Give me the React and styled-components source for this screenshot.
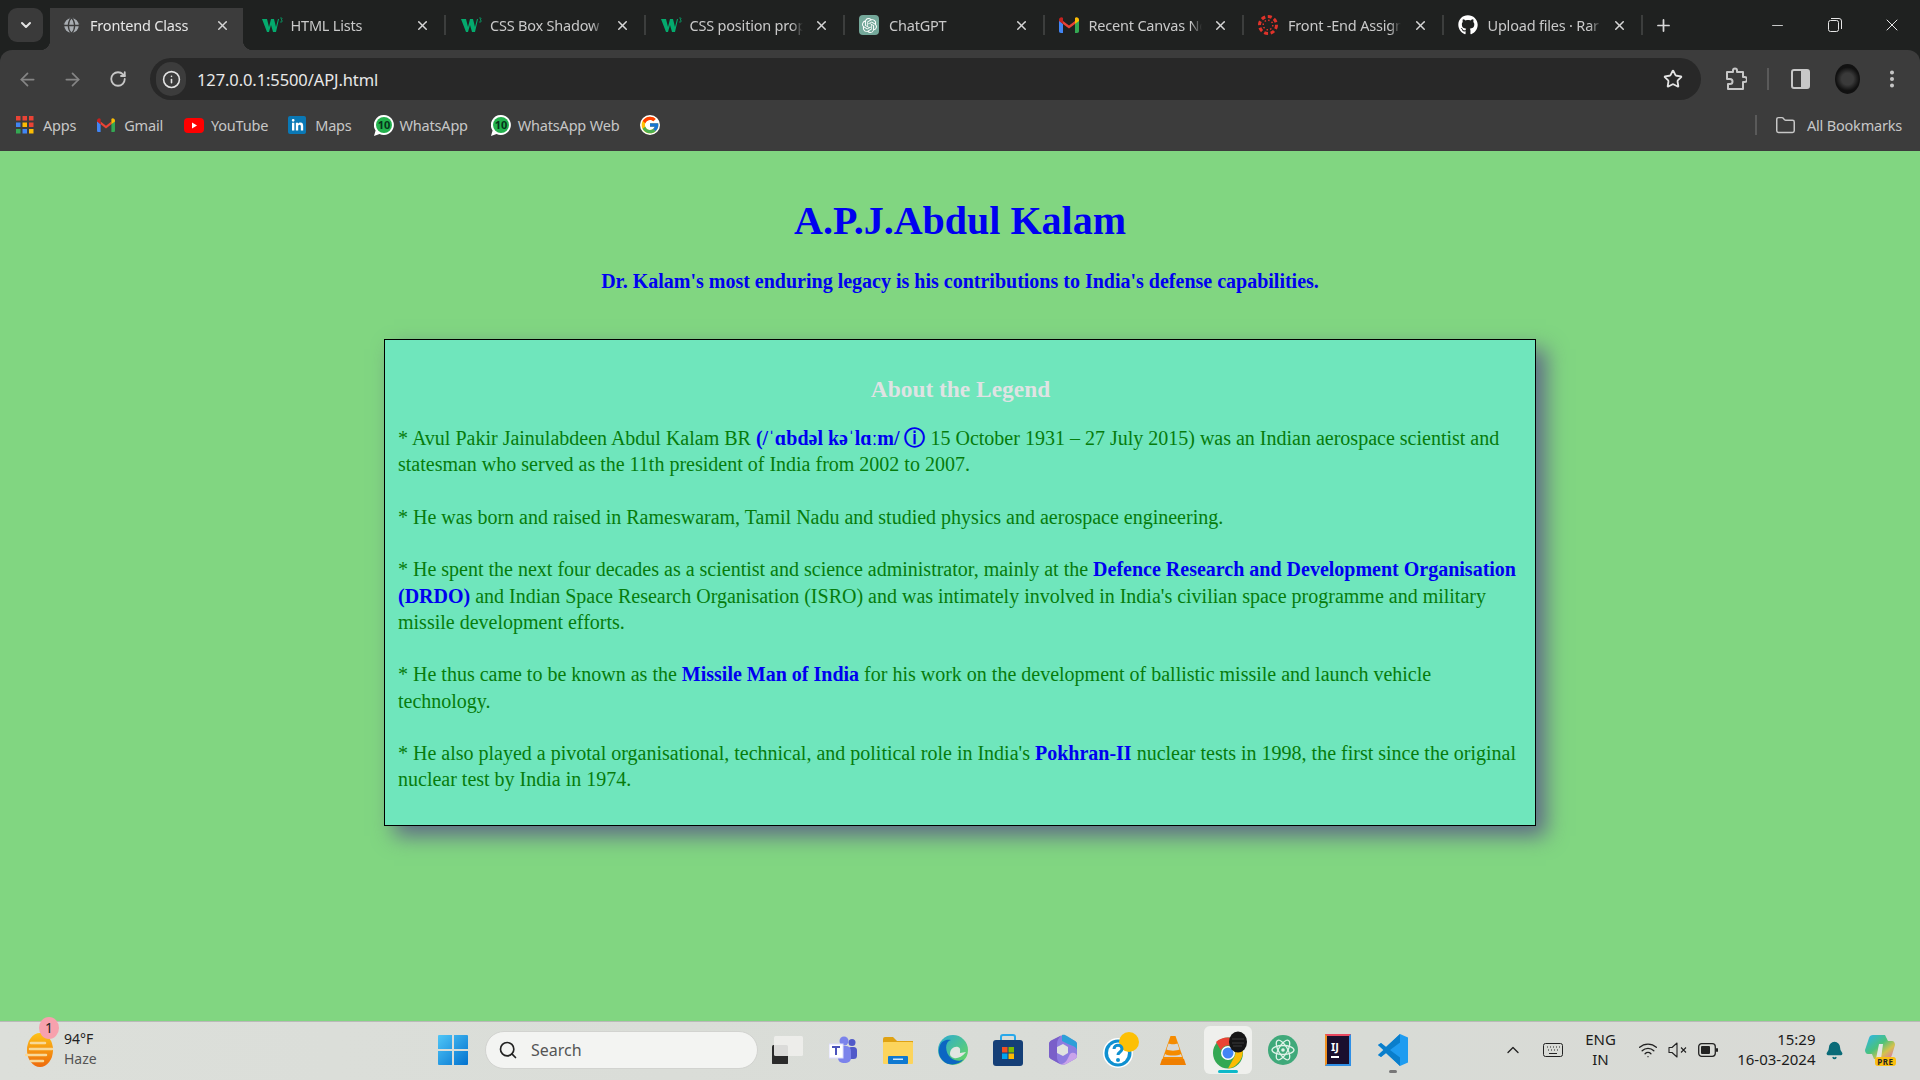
import React from 'react'
import styled, { createGlobalStyle } from 'styled-components'
import {
  ArrowLeft, ArrowRight, RotateCw, Star, EllipsisVertical, Folder, X, Plus, Minus,
  ChevronDown, ChevronUp, Search, Wifi, Bell, Globe, Info,
} from 'lucide-react'
import { FaGithub, FaLinkedinIn } from 'react-icons/fa'
import { FcGoogle } from 'react-icons/fc'
import { SiOpenai } from 'react-icons/si'

const GlobalStyle = createGlobalStyle`
  html, body { margin: 0; padding: 0; height: 100%; }
  body { overflow: hidden; font-family: "Noto Sans", sans-serif; }
`

/* ---- small drawn icons ---- */

const W3 = () => (
  <svg width="22" height="16" viewBox="0 0 22 16">
    <path d="M1 2h5l2 8 2-8h3l2 8 2-8h1l-3 13h-3l-2-7-2 7H6z" fill="#04aa6d" />
    <path d="M19 1h2v1l-1 1h1v2h-2" fill="none" stroke="#04aa6d" strokeWidth=".7" />
  </svg>
)

const GmailIcon = ({ size = 20 }) => (
  <svg width={size} height={size * 0.8} viewBox="0 0 20 16">
    <path d="M0 3v11c0 1 .6 2 2 2h2V7z" fill="#4285f4" />
    <path d="M20 3v11c0 1-.6 2-2 2h-2V7z" fill="#34a853" />
    <path d="M4 16V7l6 4.6L16 7V4l-6 4.6L4 4z" fill="#ea4335" />
    <path d="M0 3c0-2.500 2.700-3.500 4-2v6L0 4z" fill="#c5221f" />
    <path d="M20 3c0-2.500-2.700-3.500-4-2v6l4-3z" fill="#fbbc04" />
  </svg>
)

const CanvasIcon = () => (
  <svg width="20" height="20" viewBox="0 0 20 20" fill="#e0332a">
    <circle cx="10" cy="10" r="8.500" fill="none" stroke="#e0332a" strokeWidth="3" strokeDasharray="4 2.600" />
    <circle cx="10" cy="10" r="4.800" fill="none" stroke="#e0332a" strokeWidth="1.400" strokeDasharray="1.500 2.200" />
  </svg>
)

const AppsIcon = () => (
  <svg width="18" height="18" viewBox="0 0 18 18">
    {['#ea4335', '#ea4335', '#ea4335', '#4285f4', '#fbbc04', '#ea4335', '#34a853', '#4285f4', '#fbbc04'].map((c, i) => (
      <rect key={i} x={(i % 3) * 6.5} y={Math.floor(i / 3) * 6.500} width="4.500" height="4.500" fill={c} />
    ))}
  </svg>
)

const YoutubeIcon = () => (
  <svg width="20" height="15" viewBox="0 0 20 15">
    <rect width="20" height="15" rx="4" fill="#f00" />
    <path d="M8 4.500v6l5-3z" fill="#fff" />
  </svg>
)

const WhatsAppBadge = () => (
  <svg width="20" height="21" viewBox="0 0 20 21">
    <path d="M10 0a10 10 0 1 1-4.500 19L0 21l1.600-5.400A10 10 0 0 1 10 0z" fill="#fff" />
    <circle cx="10" cy="10" r="8" fill="#23b14d" />
    <text x="10" y="14" textAnchor="middle" fontSize="11" fontWeight="700" fontFamily="Noto Sans, sans-serif" fill="#06331a">10</text>
  </svg>
)

const ExtensionIcon = () => (
  <svg width="22" height="24" viewBox="0 0 22 24" fill="none" stroke="#c7c7c7" strokeWidth="2" strokeLinejoin="round">
    <path d="M2 5h6V3.500a2 2 0 0 1 4 0V5h6v5h1.500a2.300 2.300 0 0 1 0 5H18v7H3v-5h2a2 2 0 0 0 0-5H2z" />
  </svg>
)

const SidePanelIcon = () => (
  <svg width="20" height="20" viewBox="0 0 20 20">
    <rect x="1" y="1" width="17" height="18" rx="2" fill="none" stroke="#c7c7c7" strokeWidth="2" />
    <rect x="10" y="1" width="8" height="18" fill="#c7c7c7" />
  </svg>
)

const RestoreIcon = () => (
  <svg width="14" height="14" viewBox="0 0 14 14" fill="none" stroke="#e6e6e6">
    <rect x=".5" y="2.500" width="10" height="11" rx="2" />
    <path d="M3 .5h8a2.500 2.500 0 0 1 2.500 2.500v8" />
  </svg>
)

const WeatherIcon = () => (
  <svg width="30" height="36" viewBox="0 0 30 36">
    <defs>
      <linearGradient id="sun" x1="0" y1="0" x2="0" y2="1">
        <stop offset="0" stopColor="#fdc218" />
        <stop offset="1" stopColor="#ee6a0c" />
      </linearGradient>
    </defs>
    <ellipse cx="15" cy="18" rx="13" ry="17" fill="url(#sun)" />
    <g stroke="#f8d99a" strokeWidth="2.500" strokeLinecap="round">
      <path d="M6 11h14M5 17h22M1 23h20M6 29h12" />
    </g>
  </svg>
)

const WindowsIcon = () => (
  <svg width="30" height="30" viewBox="0 0 30 30">
    <defs>
      <linearGradient id="win" x1="0" y1="0" x2="1" y2="1">
        <stop offset="0" stopColor="#4fc6f7" />
        <stop offset="1" stopColor="#0272cf" />
      </linearGradient>
    </defs>
    <path d="M0 1a1 1 0 0 1 1-1h13v14H0zM16 0h13a1 1 0 0 1 1 1v13H16zM0 16h14v14H1a1 1 0 0 1-1-1zM16 16h14v13a1 1 0 0 1-1 1H16z" fill="url(#win)" />
  </svg>
)

const TaskViewIcon = () => (
  <svg width="32" height="30" viewBox="0 0 32 30">
    <rect x="0" y="10" width="16" height="19" rx="1.500" fill="#2b2b2b" />
    <rect x="2" y="1" width="29" height="20" rx="1.500" fill="#eeeeec" opacity=".9" />
    <rect x="0" y="21" width="16" height="8" rx="1" fill="#2b2b2b" />
  </svg>
)

const TeamsIcon = () => (
  <svg width="28" height="28" viewBox="0 0 28 28">
    <circle cx="23" cy="6.500" r="3.500" fill="#5059c9" />
    <circle cx="15" cy="5" r="4.500" fill="#7b83eb" />
    <rect x="19" y="11" width="9" height="12" rx="3.500" fill="#5059c9" />
    <rect x="9" y="10" width="13" height="17" rx="5" fill="#7b83eb" />
    <rect x="0" y="8" width="14" height="14" fill="#fff" stroke="#dcdcff" />
    <path d="M3 11h8M7 11v8" stroke="#4b53bc" strokeWidth="2" />
  </svg>
)

const FolderColorIcon = () => (
  <svg width="30" height="28" viewBox="0 0 30 28">
    <path d="M0 3a2 2 0 0 1 2-2h8l4 4h16v4H0z" fill="#dfa213" />
    <rect x="0" y="6" width="30" height="22" rx="1" fill="#fcd45c" />
    <rect x="5" y="20" width="20" height="8" rx="1" fill="#0f79d1" />
    <rect x="10" y="22.500" width="10" height="1.500" fill="#cfe8fb" />
  </svg>
)

const EdgeIcon = () => (
  <svg width="30" height="30" viewBox="0 0 30 30">
    <defs>
      <linearGradient id="edge" x1="0" y1="0" x2="1" y2="1">
        <stop offset="0" stopColor="#2aa9d6" />
        <stop offset="1" stopColor="#6bd95a" />
      </linearGradient>
    </defs>
    <circle cx="15" cy="15" r="15" fill="url(#edge)" />
    <path d="M1 14C2 6 8 4 13 5c-7 2-6 13 0 18 4 3 9 4 13 1-4 5-12 7-18 4C3 25 0 20 1 14z" fill="#0c66c2" />
    <path d="M12 19c0-5 4-8 8-7 3 1 2 4 2 6l6-1c-4 5-9 7-12 6-2-.5-4-2-4-4z" fill="#e2e6e2" />
  </svg>
)

const StoreIcon = () => (
  <svg width="30" height="32" viewBox="0 0 30 32">
    <path d="M8 6V3a2 2 0 0 1 2-2h10a2 2 0 0 1 2 2v3" fill="none" stroke="#28a8ea" strokeWidth="2" />
    <rect x="0" y="6" width="30" height="26" rx="3" fill="#153f77" />
    <rect x="9" y="13" width="5.500" height="5.500" fill="#f25022" />
    <rect x="15.500" y="13" width="5.500" height="5.500" fill="#7fba00" />
    <rect x="9" y="19.500" width="5.500" height="5.500" fill="#00a4ef" />
    <rect x="15.500" y="19.500" width="5.500" height="5.500" fill="#ffb900" />
  </svg>
)

const M365Icon = () => (
  <svg width="28" height="32" viewBox="0 0 28 32">
    <path d="M14 1 26 7c1.500 1 2 2 2 3v12c0 1-.5 2-2 3l-9 5c-2 1-4 1-6 0l-9-5c-1.500-1-2-2-2-3V10c0-1 .5-2 2-3z" fill="#8e7ce0" />
    <path d="M13 1c2-.5 3 0 5 1l8 5c1.500 1 2 2 2 3v7c0-3-2-4-4-5l-5-2-6-3z" fill="#2d9fd8" />
    <path d="M0 10c0-2 1-3 3-4l10-5C9 4 8 7 8 10v14c0 2 1 3 3 6l-9-5c-1.500-1-2-2-2-3z" fill="#7a5fc9" />
    <path d="M28 22c0 1-.5 2-2 3l-9 5c-2 1-4 1-6 0 4 0 6-2 8-6l2-4c2-2 6-2 7 2z" fill="#c9a3ea" />
    <path d="M14 10l5 3v6l-5 3-6-3v-6z" fill="#e0e3df" />
  </svg>
)

const HelpIcon = () => (
  <svg width="42" height="36" viewBox="-7 0 42 36">
    <ellipse cx="14" cy="21" rx="15" ry="15" fill="#fff" />
    <ellipse cx="14" cy="21" rx="13.500" ry="13.500" fill="#0f90d0" />
    <ellipse cx="14" cy="21" rx="10" ry="10.500" fill="#fff" />
    <ellipse cx="25" cy="10" rx="10" ry="10" fill="#fdc005" />
    <path d="M10 17c0-5 8-5 8 0 0 3-4 3-4 6" fill="none" stroke="#0f90d0" strokeWidth="3" />
    <circle cx="14" cy="28" r="2" fill="#0f90d0" />
  </svg>
)

const VlcIcon = () => (
  <svg width="26" height="30" viewBox="0 0 26 30">
    <path d="M10.500 1h5l8 23h-21z" fill="#f58b00" />
    <path d="M8.500 8.500c2 1 7 1 9 0l2 6c-3 1.500-10 1.500-13 0z" fill="#d8d8d6" />
    <path d="M5 19c3 2 13 2 16 0l1 3H4z" fill="#d8d8d6" />
    <path d="M0 30l2-6h22l2 6z" fill="#ef7f00" />
  </svg>
)

const ChromeIcon = () => (
  <svg width="38" height="38" viewBox="-4 0 38 38">
    <ellipse cx="15" cy="22" rx="15" ry="15.500" fill="#34a853" />
    <path d="M15 6.500c6 0 11 3.500 13.500 8H15c-3.500 0-6 2-7 5L3 11C6 8 10 6.500 15 6.500z" fill="#ea4335" />
    <path d="M28.500 14.500C31 20 30 28 24 33c-2.500 3-6 4-9 4.500l6-11c2-2 2-8-1-12z" fill="#fbbc04" />
    <circle cx="15" cy="22" r="7" fill="#fff" />
    <circle cx="15" cy="22" r="5.500" fill="#4285f4" />
    <ellipse cx="25" cy="11" rx="9" ry="10.500" fill="#151515" />
    <path d="M19 8h12M19 12h12M20 15h9" stroke="#3a3a3a" strokeWidth="1" />
  </svg>
)

const AtomIcon = () => (
  <svg width="30" height="30" viewBox="0 0 30 30">
    <circle cx="15" cy="15" r="15" fill="#3fa97a" />
    <g fill="none" stroke="#dff2e8" strokeWidth="1.300">
      <ellipse cx="15" cy="15" rx="11" ry="4.500" />
      <ellipse cx="15" cy="15" rx="11" ry="4.500" transform="rotate(60 15 15)" />
      <ellipse cx="15" cy="15" rx="11" ry="4.500" transform="rotate(120 15 15)" />
    </g>
    <circle cx="15" cy="15" r="1.800" fill="#dff2e8" />
  </svg>
)

const IdeaIcon = () => (
  <IdeaBox>
    <IdeaLetters>IJ</IdeaLetters>
    <IdeaDash />
  </IdeaBox>
)

const VsCodeIcon = () => (
  <svg width="30" height="32" viewBox="0 0 30 32">
    <path d="M22 0 30 3.500v25L22 32 8 19l-5 4-3-2 5.500-5L0 11l3-2 5 4z" fill="#1f9cf0" />
    <path d="M22 0 8 13l-5-4-3 2 5.500 5L0 21l3 2 5-4 14 13zM22 8.500v15L12 16z" fill="#0a7ecb" fillRule="evenodd" />
  </svg>
)

const KeyboardIcon = () => (
  <svg width="20" height="14" viewBox="0 0 20 14" fill="none" stroke="#222">
    <rect x=".5" y=".5" width="19" height="13" rx="2" />
    <path d="M4 4h1M7 4h1M10 4h1M13 4h1M16 4h1M5 7h1M8 7h1M11 7h1M14 7h1M6 10.500h8" />
  </svg>
)

const SpeakerOffIcon = () => (
  <svg width="20" height="16" viewBox="0 0 20 16" fill="none" stroke="#222" strokeWidth="1.100">
    <path d="M1 5.500h3L9 1v14l-5-4.500H1z" strokeLinejoin="round" />
    <path d="M13 5.500l5 5M18 5.500l-5 5" />
  </svg>
)

const BatteryIcon = () => (
  <svg width="20" height="14" viewBox="0 0 20 14">
    <rect x=".7" y=".7" width="16.600" height="12.600" rx="3" fill="none" stroke="#222" strokeWidth="1.300" />
    <rect x="3" y="3" width="9" height="8" rx="1" fill="#222" />
    <rect x="18" y="5" width="2" height="4" rx="1" fill="#222" />
  </svg>
)

const CopilotIcon = () => (
  <CopilotWrap>
    <svg width="30" height="26" viewBox="0 0 30 26">
      <defs>
        <linearGradient id="cop" x1="0" y1="0" x2="1" y2="1">
          <stop offset="0" stopColor="#2bb3f0" />
          <stop offset=".45" stopColor="#4bc27c" />
          <stop offset=".7" stopColor="#d6c24c" />
          <stop offset="1" stopColor="#d860c9" />
        </linearGradient>
      </defs>
      <path d="M8 0h12l3 6h4c2 0 3 2 3 4l-3 10c-1 3-3 4-6 4H9L7 19H3c-2 0-3-2-3-4L4 3c.5-2 2-3 4-3z" fill="url(#cop)" />
      <path d="M14 9h4l-2 15h-5z" fill="#e4e6e2" />
    </svg>
    <PreTag>PRE</PreTag>
  </CopilotWrap>
)

/* ---- page ---- */

function App() {
  return (
    <Screen>
      <GlobalStyle />
      <TabStrip>
        <TabSearch><ChevronDown size={16} color="#e3e3e3" strokeWidth={3} /></TabSearch>
        {tabs.map((t) => (
          <Tab key={t.title} $active={t.active}>
            <TabIcon $active={t.active}>{t.icon}</TabIcon>
            <TabTitle $active={t.active}>{t.title}</TabTitle>
            <TabClose><X size={15} color="#d6d6d6" strokeWidth={2.4} /></TabClose>
          </Tab>
        ))}
        <NewTab><Plus size={19} color="#d8d8d8" strokeWidth={2.2} /></NewTab>
        <WindowButtons>
          <WindowButton><Minus size={17} color="#e6e6e6" strokeWidth={1.2} /></WindowButton>
          <WindowButton><RestoreIcon /></WindowButton>
          <WindowButton><X size={20} color="#e6e6e6" strokeWidth={1.2} /></WindowButton>
        </WindowButtons>
      </TabStrip>

      <Toolbar>
        <NavButton><ArrowLeft size={21} color="#858585" strokeWidth={2} /></NavButton>
        <NavButton><ArrowRight size={21} color="#858585" strokeWidth={2} /></NavButton>
        <NavButton><RotateCw size={18} color="#c7c7c7" strokeWidth={2.4} /></NavButton>
        <UrlBar>
          <InfoChip><Info size={19} color="#e3e3e3" strokeWidth={2} /></InfoChip>
          <UrlText>127.0.0.1:5500/APJ.html</UrlText>
          <StarWrap><Star size={20} color="#e3e3e3" strokeWidth={2.2} /></StarWrap>
        </UrlBar>
        <ToolIcon $ml={24}><ExtensionIcon /></ToolIcon>
        <ToolDivider />
        <ToolIcon $ml={22}><SidePanelIcon /></ToolIcon>
        <Avatar />
        <ToolIcon $ml={21}><EllipsisVertical size={22} color="#c7c7c7" strokeWidth={2.4} /></ToolIcon>
      </Toolbar>

      <BookmarkBar>
        {bookmarks.map((b) => (
          <Bookmark key={b.label} $gap={b.gap} $next={b.next}>
            {b.icon}
            <BookmarkLabel>{b.label}</BookmarkLabel>
          </Bookmark>
        ))}
        <GoogleBadge><FcGoogle size={20} /></GoogleBadge>
        <BookmarkDivider />
        <Bookmark $gap={11} $next={0}>
          <Folder size={21} color="#c7c7c7" strokeWidth={1.7} />
          <BookmarkLabel>All Bookmarks</BookmarkLabel>
        </Bookmark>
      </BookmarkBar>

      <Page>
        <Title>A.P.J.Abdul Kalam</Title>
        <Subtitle>Dr. Kalam's most enduring legacy is his contributions to India's defense capabilities.</Subtitle>
        <Card>
          <CardHeading>About the Legend</CardHeading>
          <CardText>
            * Avul Pakir Jainulabdeen Abdul Kalam BR <Mark>(/ˈɑbdəl kəˈlɑːm/ <InfoMark>ⓘ</InfoMark></Mark> 15 October 1931 – 27 July 2015) was an Indian aerospace scientist and statesman who served as the 11th president of India from 2002 to 2007.
            <br /><br />
            * He was born and raised in Rameswaram, Tamil Nadu and studied physics and aerospace engineering.
            <br /><br />
            * He spent the next four decades as a scientist and science administrator, mainly at the <Mark>Defence Research and Development Organisation (DRDO)</Mark> and Indian Space Research Organisation (ISRO) and was intimately involved in India's civilian space programme and military missile development efforts.
            <br /><br />
            * He thus came to be known as the <Mark>Missile Man of India</Mark> for his work on the development of ballistic missile and launch vehicle technology.
            <br /><br />
            * He also played a pivotal organisational, technical, and political role in India's <Mark>Pokhran-II</Mark> nuclear tests in 1998, the first since the original nuclear test by India in 1974.
          </CardText>
        </Card>
      </Page>

      <Taskbar>
        <Weather>
          <WeatherIcon />
          <WeatherBadge>1</WeatherBadge>
          <WeatherText>
            <span>94°F</span>
            <WeatherSub>Haze</WeatherSub>
          </WeatherText>
        </Weather>
        <StartSlot><WindowsIcon /></StartSlot>
        <SearchPill>
          <Search size={20} color="#222" strokeWidth={2} />
          <SearchLabel>Search</SearchLabel>
        </SearchPill>
        <TaskIcons>
          {taskIcons.map((icon, i) => (
            <TaskSlot key={i} $active={i === 8} $running={i === 11}>{icon}</TaskSlot>
          ))}
        </TaskIcons>
        <Tray>
          <TraySlot $w={32}><ChevronUp size={20} color="#222" strokeWidth={1.6} /></TraySlot>
          <TraySlot $w={48}><KeyboardIcon /></TraySlot>
          <TrayLang>ENG<br />IN</TrayLang>
          <TraySlot $w={30} $ml={8}><Wifi size={20} color="#222" strokeWidth={1.6} /></TraySlot>
          <TraySlot $w={30}><SpeakerOffIcon /></TraySlot>
          <TraySlot $w={30}><BatteryIcon /></TraySlot>
          <Clock>15:29<br />16-03-2024</Clock>
          <TraySlot $w={32} $ml={3}><Bell size={19} color="#0a6b78" fill="#0a6b78" /></TraySlot>
          <TraySlot $w={36} $ml={11}><CopilotIcon /></TraySlot>
        </Tray>
      </Taskbar>
    </Screen>
  )
}

export default App

const Screen = styled.div`
  width: 1920px;
  height: 1080px;
  display: flex;
  flex-direction: column;
  overflow: hidden;
  background: #1f2120;
`

const TabStrip = styled.div`
  height: 50px;
  flex: none;
  display: flex;
  align-items: stretch;
  padding-left: 8px;
  background: #1f2120;
`

const TabSearch = styled.div`
  width: 35px;
  height: 34px;
  margin: 8px 4px 0 0;
  border-radius: 9px;
  background: #3a3a3a;
  display: flex;
  align-items: center;
  justify-content: center;
`

const Tab = styled.div`
  position: relative;
  width: 199.5px;
  flex: none;
  display: flex;
  align-items: center;
  padding: 0 0 0 14px;
  box-sizing: border-box;
  z-index: ${(p) => (p.$active ? 1 : 0)};

  ${(p) => p.$active ? `
    padding-left: 15px;
    background: linear-gradient(#3c3c3c, #3c3c3c) no-repeat 3px 8px / 193px 42px;
    border-radius: 10px 10px 0 0;
    &::before, &::after {
      content: '';
      position: absolute;
      bottom: 0;
      width: 10px;
      height: 10px;
    }
    &::before { left: -7px; background: radial-gradient(circle at 0 0, transparent 10px, #3c3c3c 10.5px); }
    &::after { right: -6.5px; background: radial-gradient(circle at 100% 0, transparent 10px, #3c3c3c 10.5px); }
  ` : `
    &::after {
      content: '';
      position: absolute;
      right: 0;
      top: 15px;
      width: 2px;
      height: 20px;
      background: #3c3e3d;
    }
  `}
`

const TabIcon = styled.div`
  width: ${(p) => (p.$active ? 28 : 30)}px;
  flex: none;
  display: flex;
  align-items: center;
`

const TabTitle = styled.div`
  width: 113px;
  flex: none;
  overflow: hidden;
  white-space: nowrap;
  font-size: 14.500px;
  letter-spacing: -0.2px;
  color: ${(p) => (p.$active ? '#e6e6e6' : '#c9c9c9')};
  -webkit-mask-image: linear-gradient(90deg, #000 90%, transparent 100%);
  mask-image: linear-gradient(90deg, #000 90%, transparent 100%);
`

const TabClose = styled.div`
  margin-left: 10px;
  width: 18px;
  display: flex;
  justify-content: center;
`

const NewTab = styled.div`
  width: 28px;
  margin-left: 6px;
  display: flex;
  align-items: center;
  justify-content: center;
`

const WindowButtons = styled.div`
  margin-left: auto;
  display: flex;
`

const WindowButton = styled.div`
  width: 57px;
  height: 50px;
  display: flex;
  align-items: center;
  justify-content: center;
`

const Toolbar = styled.div`
  height: 50px;
  flex: none;
  box-sizing: border-box;
  padding: 8px 0 0 5px;
  background: #3c3c3c;
  border-radius: 12px 12px 0 0;
  display: flex;
  align-items: stretch;
`

const NavButton = styled.div`
  width: 45px;
  display: flex;
  align-items: center;
  justify-content: center;
`

const UrlBar = styled.div`
  width: 1551px;
  margin-left: 10px;
  height: 42px;
  border-radius: 21px;
  background: #282828;
  display: flex;
  align-items: center;
  padding: 0 18px 0 6px;
  box-sizing: border-box;
`

const InfoChip = styled.div`
  width: 30px;
  height: 34px;
  border-radius: 17px;
  background: #3c3c3c;
  display: flex;
  align-items: center;
  justify-content: center;
`

const UrlText = styled.div`
  margin-left: 11px;
  font-size: 16.500px;
  letter-spacing: -0.1px;
  color: #e8e8e8;
`

const StarWrap = styled.div`
  margin-left: auto;
  display: flex;
`

const ToolIcon = styled.div`
  margin-left: ${(p) => p.$ml}px;
  display: flex;
  align-items: center;
`

const ToolDivider = styled.div`
  width: 2px;
  height: 22px;
  margin: 10px 0 0 20px;
  background: #5a5a5a;
`

const Avatar = styled.div`
  width: 25px;
  height: 30px;
  margin: 6px 0 0 24px;
  border-radius: 50%;
  background: radial-gradient(circle, #3a3a3a 0 30%, #111 60%);
`

const BookmarkBar = styled.div`
  height: 51px;
  flex: none;
  box-sizing: border-box;
  padding: 0 18px 1px 16px;
  background: #3c3c3c;
  display: flex;
  align-items: center;
`

const Bookmark = styled.div`
  display: flex;
  align-items: center;
  gap: ${(p) => p.$gap}px;
  margin-right: ${(p) => p.$next}px;
`

const BookmarkLabel = styled.span`
  font-size: 14.500px;
  letter-spacing: -0.2px;
  color: #c7c7c7;
`

const BookmarkDivider = styled.div`
  width: 2px;
  height: 20px;
  margin-left: auto;
  margin-right: 18px;
  background: #5a5a5a;
`

const GoogleBadge = styled.span`
  display: flex;
  border-radius: 50%;
  background: #fff;
`

const LinkedinBox = styled.span`
  width: 18px;
  height: 18px;
  border-radius: 2px;
  background: #0a78b5;
  display: flex;
  align-items: center;
  justify-content: center;
`

const GptBox = styled.div`
  width: 20px;
  height: 20px;
  border-radius: 4px;
  background: #74a89a;
  display: flex;
  align-items: center;
  justify-content: center;
`

const Page = styled.main`
  flex: 1;
  min-height: 0;
  background: #81d681;
  display: flex;
  flex-direction: column;
  align-items: center;
  font-family: "Liberation Serif", serif;
`

const Title = styled.h1`
  margin: 47px 0 0;
  font-size: 40px;
  line-height: 46px;
  font-weight: 700;
  color: #0000f0;
`

const Subtitle = styled.p`
  margin: 26px 0 0;
  font-size: 20px;
  line-height: 23px;
  font-weight: 700;
  color: #0000f0;
`

const Card = styled.section`
  width: 1152px;
  height: 487px;
  margin-top: 46px;
  box-sizing: border-box;
  padding: 0 12px 0 13px;
  border: 1px solid #000;
  background: #6fe6bc;
  box-shadow: 10px 10px 20px #5f6b86;
`

const CardHeading = styled.h2`
  margin: 36px 0 0;
  text-align: center;
  font-size: 23.400px;
  line-height: 27px;
  font-weight: 700;
  color: #dfe3e3;
`

const CardText = styled.p`
  margin: 22px 0 0;
  font-size: 20px;
  line-height: 26.250px;
  color: #067c0c;
`

const Mark = styled.b`
  color: #0000f0;
`

const InfoMark = styled.span`
  font-size: 21px;
  line-height: 1;
  font-weight: 700;
`

const Taskbar = styled.footer`
  height: 59px;
  flex: none;
  box-sizing: border-box;
  padding-bottom: 2px;
  border-top: 1px solid #b9bab8;
  background: linear-gradient(90deg, #dcdfda, #d8dbd6 70%, #d9dad6);
  display: flex;
  align-items: center;
`

const Weather = styled.div`
  position: relative;
  width: 424.500px;
  flex: none;
  box-sizing: border-box;
  padding-left: 25px;
  display: flex;
  align-items: center;
  gap: 9px;
`

const WeatherBadge = styled.span`
  position: absolute;
  left: 39px;
  top: -12px;
  width: 20px;
  height: 22px;
  border-radius: 50%;
  background: #f7a1ad;
  font-size: 14px;
  line-height: 22px;
  text-align: center;
  color: #222;
`

const WeatherText = styled.div`
  display: flex;
  flex-direction: column;
  margin-bottom: 2px;
  font-size: 14px;
  line-height: 20px;
  color: #222;
`

const WeatherSub = styled.span`
  color: #555;
`

const StartSlot = styled.div`
  width: 55px;
  flex: none;
  padding-left: 1px;
  box-sizing: border-box;
  display: flex;
  justify-content: center;
`

const SearchPill = styled.div`
  width: 273px;
  height: 38px;
  flex: none;
  margin-left: 5.500px;
  box-sizing: border-box;
  padding-left: 12px;
  border-radius: 19px;
  border: 1px solid #d2d3d0;
  background: #f3f4f2;
  display: flex;
  align-items: center;
  gap: 13px;
`

const SearchLabel = styled.span`
  font-size: 16px;
  color: #555;
`

const TaskIcons = styled.div`
  margin-left: 2.500px;
  display: flex;
  flex: none;
`

const TaskSlot = styled.div`
  position: relative;
  width: 48px;
  height: 48px;
  margin: 0 3.500px;
  border-radius: 6px;
  display: flex;
  align-items: center;
  justify-content: center;
  background: ${(p) => (p.$active ? '#eff0ed' : 'transparent')};

  ${(p) => (p.$active || p.$running) && `
    &::after {
      content: '';
      position: absolute;
      bottom: 1px;
      left: 50%;
      transform: translateX(-50%);
      width: ${p.$active ? 20 : 8}px;
      height: 3px;
      border-radius: 2px;
      background: ${p.$active ? '#0db9c9' : '#777'};
    }
  `}
`

const IdeaBox = styled.div`
  width: 26px;
  height: 32px;
  box-sizing: border-box;
  padding: 5px 4px;
  background: #1a0f2e;
  border: 2px solid;
  border-color: #e8475f #2f8fe6 #2f8fe6 #f09020;
`

const IdeaLetters = styled.div`
  font-size: 11px;
  line-height: 11px;
  font-weight: 700;
  color: #fff;
`

const IdeaDash = styled.div`
  width: 8px;
  height: 2px;
  margin-top: 4px;
  background: #fff;
`

const Tray = styled.div`
  margin-left: 76px;
  display: flex;
  align-items: center;
  color: #1c1c1c;
`

const TraySlot = styled.div`
  width: ${(p) => p.$w}px;
  margin-left: ${(p) => p.$ml || 0}px;
  flex: none;
  display: flex;
  justify-content: center;
`

const TrayLang = styled.div`
  width: 48px;
  flex: none;
  margin-bottom: 2px;
  text-align: center;
  font-size: 15px;
  line-height: 20px;
`

const Clock = styled.div`
  width: 93px;
  flex: none;
  margin-bottom: 2px;
  text-align: right;
  font-size: 15px;
  line-height: 20px;
`

const CopilotWrap = styled.div`
  position: relative;
  width: 30px;
  height: 30px;
`

const PreTag = styled.span`
  position: absolute;
  right: -1px;
  bottom: -1px;
  padding: 0 2px;
  border-radius: 3px;
  background: #fbbf12;
  font-size: 8px;
  line-height: 9px;
  font-weight: 700;
  letter-spacing: .5px;
  color: #222;
`

/* ---- data ---- */

const tabs = [
  { title: 'Frontend Class', icon: <Globe size={19} color="#3c3c3c" fill="#a8adb2" strokeWidth={1.6} />, active: true },
  { title: 'HTML Lists', icon: <W3 /> },
  { title: 'CSS Box Shadow', icon: <W3 /> },
  { title: 'CSS position properties', icon: <W3 /> },
  { title: 'ChatGPT', icon: <GptBox><SiOpenai size={15} color="#fff" /></GptBox> },
  { title: 'Recent Canvas Notifications', icon: <GmailIcon /> },
  { title: 'Front -End Assignment', icon: <CanvasIcon /> },
  { title: 'Upload files · Rar', icon: <FaGithub size={20} color="#fff" /> },
]

const bookmarks = [
  { label: 'Apps', icon: <AppsIcon />, gap: 9, next: 21 },
  { label: 'Gmail', icon: <GmailIcon size={18} />, gap: 9, next: 21 },
  { label: 'YouTube', icon: <YoutubeIcon />, gap: 7, next: 20 },
  { label: 'Maps', icon: <LinkedinBox><FaLinkedinIn size={13} color="#fff" /></LinkedinBox>, gap: 9, next: 22 },
  { label: 'WhatsApp', icon: <WhatsAppBadge />, gap: 6, next: 23 },
  { label: 'WhatsApp Web', icon: <WhatsAppBadge />, gap: 7, next: 21 },
]

const taskIcons = [
  <TaskViewIcon key="view" />, <TeamsIcon key="teams" />, <FolderColorIcon key="folder" />, <EdgeIcon key="edge" />,
  <StoreIcon key="store" />, <M365Icon key="m365" />, <HelpIcon key="help" />, <VlcIcon key="vlc" />,
  <ChromeIcon key="chrome" />, <AtomIcon key="atom" />, <IdeaIcon key="idea" />, <VsCodeIcon key="code" />,
]
